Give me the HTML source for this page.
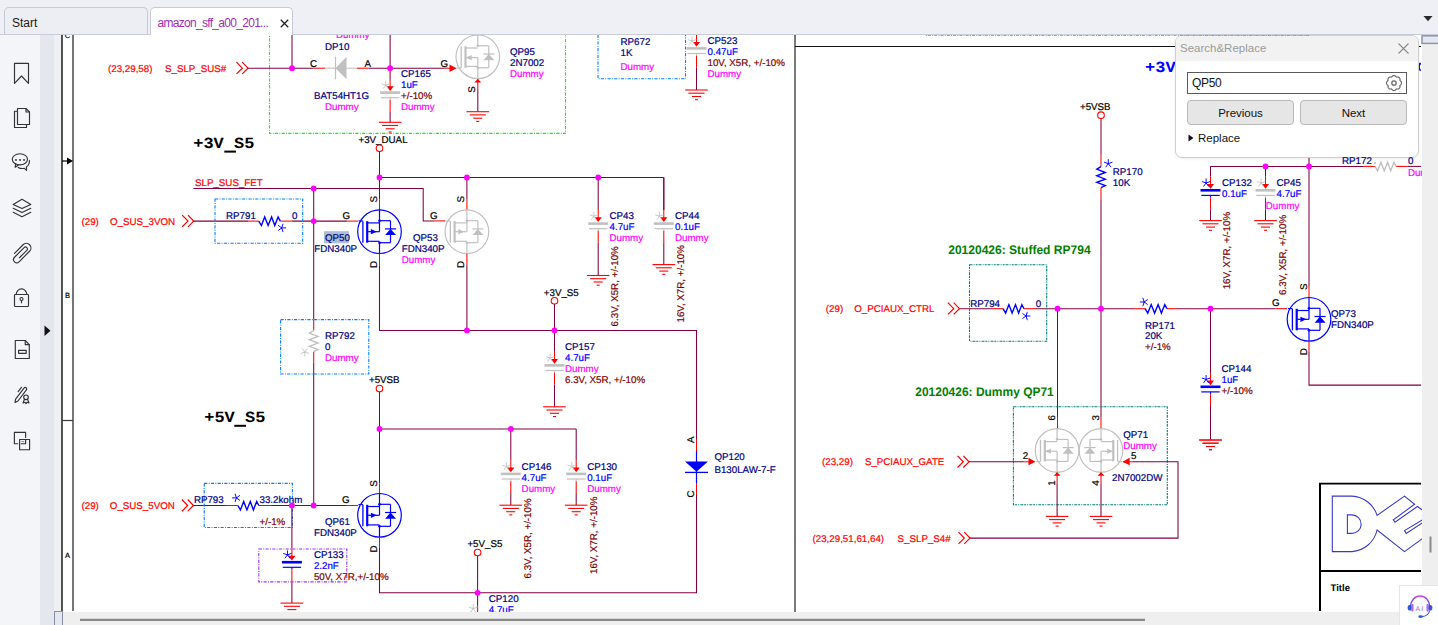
<!DOCTYPE html>
<html><head><meta charset="utf-8"><title>viewer</title>
<style>
html,body{margin:0;padding:0;}
body{width:1438px;height:625px;overflow:hidden;position:relative;background:#eef0f4;font-family:"Liberation Sans",sans-serif;}
#tabbar{position:absolute;left:0;top:0;width:1438px;height:34px;background:#eef0f5;border-bottom:1px solid #c9cdd8;}
.tab{position:absolute;top:7px;height:27px;box-sizing:border-box;border:1px solid #c5cad6;border-bottom:none;border-radius:5px 5px 0 0;font-size:12px;line-height:12px;white-space:nowrap;}
.tab span.t{position:absolute;top:9px;}
#t1{left:4px;width:144px;background:#eceef3;color:#1a1a1a;}
#t1 span.t{left:7px;}
#t2{left:149.5px;width:143px;background:#ffffff;color:#a42bb5;height:28px;}
#t2 span.t{left:7px;letter-spacing:-0.7px;}
#side{position:absolute;left:0;top:35px;width:40px;height:590px;background:#f4f5f8;}
#strip{position:absolute;left:40px;top:35px;width:14px;height:590px;background:#e4e7ee;}
#page{position:absolute;left:62px;top:35px;width:1360px;height:577px;background:#fff;}
#vscroll{position:absolute;left:1422px;top:35px;width:16px;height:590px;background:#efefef;}
#hscroll{position:absolute;left:54px;top:611.5px;width:1368px;height:14px;background:#efefef;}
svg text{font-family:"Liberation Sans",sans-serif;text-rendering:geometricPrecision;}
#dlg{position:absolute;left:1175px;top:35px;width:244px;height:123px;box-sizing:border-box;border:1px solid #cfcfcf;border-radius:7px;background:#fff;overflow:hidden;box-shadow:0 1px 3px rgba(0,0,0,0.08);}
#dlgh{position:absolute;left:0;top:0;width:100%;height:25px;background:#f2f2f2;}
#dlgt{position:absolute;left:4px;top:6px;font-size:11.5px;color:#9b9b9b;}
#inp{position:absolute;left:11px;top:36px;width:220px;height:22px;box-sizing:border-box;border:1px solid #5a5a5a;background:#fff;}
#inpt{position:absolute;left:4px;top:3px;font-size:12px;color:#111;letter-spacing:-0.3px;}
.btn{position:absolute;top:64px;width:107px;height:25px;box-sizing:border-box;border:1px solid #b9b9b9;border-radius:4px;background:#e6e6e6;font-size:11.5px;color:#111;text-align:center;line-height:25px;}
#rep{position:absolute;left:22px;top:96px;font-size:11.5px;color:#111;}
</style></head><body>
<div id="tabbar">
 <div class="tab" id="t1"><span class="t">Start</span></div>
 <div class="tab" id="t2"><span class="t">amazon_sff_a00_201...</span><svg style="position:absolute;left:129.5px;top:11px" width="9" height="9"><path d="M0.8,0.8 L8.2,8.2 M8.2,0.8 L0.8,8.2" stroke="#222" stroke-width="1.3"/></svg></div>
 <svg style="position:absolute;left:1422.5px;top:15px" width="11" height="8"><polygon points="0.5,1 9.5,1 5,6.2" fill="#2a2a2a"/></svg>
</div>
<div id="side"></div>
<div id="strip"></div>
<div id="page"></div>
<div id="vscroll"></div>
<div id="hscroll"></div>
<svg style="position:absolute;left:0;top:0" width="1438" height="625" viewBox="0 0 1438 625">
<defs><clipPath id="pc"><rect x="54" y="35" width="1368" height="577"/></clipPath></defs>
<g fill="none"><path d="M14.5,63.3 L28.5,63.3 L28.5,83.3 L21.5,76 L14.5,83.3 Z" fill="none" stroke="#333333" stroke-width="1.15" stroke-linejoin="round" stroke-linecap="round"/><path d="M17.5,108.5 L26,108.5 L29.5,112 L29.5,124.5 L17.5,124.5 Z" fill="none" stroke="#333333" stroke-width="1.15" stroke-linejoin="round" stroke-linecap="round"/><path d="M26,108.5 L26,112 L29.5,112" fill="none" stroke="#333333" stroke-width="1.15" stroke-linejoin="round" stroke-linecap="round"/><path d="M17.5,111.2 L14.5,111.2 L14.5,127.5 L26.5,127.5 L26.5,124.5" fill="none" stroke="#333333" stroke-width="1.15" stroke-linejoin="round" stroke-linecap="round"/><ellipse cx="19.9" cy="159.3" rx="7.6" ry="5.6" fill="none" stroke="#333333" stroke-width="1.15" stroke-linejoin="round" stroke-linecap="round"/><path d="M15.6,163.6 L15.2,167.3 L18.2,165.2" fill="none" stroke="#333333" stroke-width="1.15" stroke-linejoin="round" stroke-linecap="round"/><path d="M29.4,160.6 C29.6,163.4 28.4,165.5 26.4,166.9 L26.6,170.4 L24.3,168.3 C22,168.8 19.9,168.4 18.2,167.4" fill="none" stroke="#333333" stroke-width="1.15" stroke-linejoin="round" stroke-linecap="round"/><rect x="15.1" y="159.1" width="1.7" height="1.7" fill="#333333"/><rect x="19.2" y="159.1" width="1.7" height="1.7" fill="#333333"/><rect x="23.2" y="159.1" width="1.7" height="1.7" fill="#333333"/><path d="M22,199.3 L30.8,204.4 L22,208.6 L13.2,204.4 Z" fill="none" stroke="#333333" stroke-width="1.15" stroke-linejoin="round" stroke-linecap="round"/><path d="M13.2,208.3 L22,212.6 L30.8,208.3" fill="none" stroke="#333333" stroke-width="1.15" stroke-linejoin="round" stroke-linecap="round"/><path d="M13.2,212.3 L22,216.7 L30.8,212.3" fill="none" stroke="#333333" stroke-width="1.15" stroke-linejoin="round" stroke-linecap="round"/><g transform="translate(22.3,253.3) rotate(-45)"><path d="M-5.5,-5.5 L6.6,-5.5 A4.6,4.6 0 0 1 6.6,3.7 L-8.3,3.7 A3.2,3.2 0 0 1 -8.3,-2.7 L5.3,-2.7 A1.9,1.9 0 0 1 5.3,1.1 L-5.2,1.1" fill="none" stroke="#333333" stroke-width="1.15" stroke-linejoin="round" stroke-linecap="round"/></g><path d="M16.2,294.5 A5.3,5.6 0 0 1 26.8,294.5" fill="none" stroke="#333333" stroke-width="1.15" stroke-linejoin="round" stroke-linecap="round"/><rect x="14.5" y="294.5" width="14" height="12" rx="0.8" fill="none" stroke="#333333" stroke-width="1.15" stroke-linejoin="round" stroke-linecap="round"/><circle cx="21.5" cy="299" r="1.5" fill="none" stroke="#333333" stroke-width="1.15" stroke-linejoin="round" stroke-linecap="round"/><path d="M21.5,300.5 L21.5,302.8" fill="none" stroke="#333333" stroke-width="1.15" stroke-linejoin="round" stroke-linecap="round"/><path d="M15.3,340.5 L25.2,340.5 L29.3,344.6 L29.3,358.5 L15.3,358.5 Z" fill="none" stroke="#333333" stroke-width="1.15" stroke-linejoin="round" stroke-linecap="round"/><path d="M25.2,340.5 L25.2,344.6 L29.3,344.6" fill="none" stroke="#333333" stroke-width="1.15" stroke-linejoin="round" stroke-linecap="round"/><rect x="18.6" y="350.3" width="7.6" height="3" fill="none" stroke="#333333" stroke-width="1.15" stroke-linejoin="round" stroke-linecap="round"/><path d="M18.1,391.6 L21.5,387.3" fill="none" stroke="#333333" stroke-width="1.15" stroke-linejoin="round" stroke-linecap="round"/><path d="M15,402.6 L15.6,399.2 L24,388.1 A1.5,1.5 0 0 1 26.4,389.9 L18,401 Z" fill="none" stroke="#333333" stroke-width="1.15" stroke-linejoin="round" stroke-linecap="round"/><circle cx="26" cy="397.3" r="2.3" fill="none" stroke="#333333" stroke-width="1.15" stroke-linejoin="round" stroke-linecap="round"/><path d="M24.5,399.3 L23,403 L25,402.3 L26,403.6 L27,402.3 L29,403 L27.5,399.3" fill="none" stroke="#333333" stroke-width="1.15" stroke-linejoin="round" stroke-linecap="round"/><path d="M17.7,443.7 L14.4,443.7 L14.4,432.4 L25.6,432.4 L25.6,437.4" fill="none" stroke="#333333" stroke-width="1.15" stroke-linejoin="round" stroke-linecap="round"/><rect x="19.6" y="439.5" width="10" height="10.2" fill="none" stroke="#333333" stroke-width="1.15" stroke-linejoin="round" stroke-linecap="round"/><path d="M21.2,443.7 L25.6,443.7 L25.6,439.5" fill="none" stroke="#333333" stroke-width="1.15" stroke-linejoin="round" stroke-linecap="round"/><path d="M21.4,441.6 L24.2,441.6" stroke="#888" stroke-width="1" fill="none"/></g>
<polygon points="44.5,325.5 50.5,330.7 44.5,336" fill="#111"/>
<g clip-path="url(#pc)">
<line x1="62.0" y1="30.0" x2="62.0" y2="611.2" stroke="#2a2a2a" stroke-width="1.6"/>
<line x1="73.0" y1="30.0" x2="73.0" y2="611.0" stroke="#3c3c3c" stroke-width="1.4"/>
<line x1="62.0" y1="161.0" x2="68.0" y2="161.0" stroke="#000000" stroke-width="1.2"/>
<polygon points="67.0,157.5 67.0,164.5 73.0,161.0" fill="#000000"/>
<line x1="62.0" y1="420.5" x2="73.0" y2="420.5" stroke="#3a3a3a" stroke-width="1.2"/>
<text x="67.5" y="38.0" fill="#000000" font-size="7.5" text-anchor="middle" stroke="#000000" stroke-width="0.2">C</text>
<text x="67.5" y="297.7" fill="#000000" font-size="7.5" text-anchor="middle" stroke="#000000" stroke-width="0.2">B</text>
<text x="67.5" y="557.7" fill="#000000" font-size="7.5" text-anchor="middle" stroke="#000000" stroke-width="0.2">A</text>
<line x1="795.0" y1="30.0" x2="795.0" y2="612.0" stroke="#2a2a2a" stroke-width="1.25"/>
<line x1="795.0" y1="46.5" x2="1421.0" y2="46.5" stroke="#111111" stroke-width="1.1"/>
<rect x="269.5" y="20.0" width="296.0" height="113.4" fill="none" stroke="#00ff00" stroke-width="1.1" stroke-dasharray="3.2 1.3 0.9 1.3"/>
<text x="108.0" y="71.5" fill="#ff0000" font-size="9.75" stroke="#ff0000" stroke-width="0.2">(23,29,58)</text>
<text x="165.0" y="71.5" fill="#ff0000" font-size="9.75" stroke="#ff0000" stroke-width="0.2">S_SLP_SUS#</text>
<polyline points="236.5,62.2 242.3,68.2 236.5,73.9" stroke="#ff0000" stroke-width="1.2" fill="none" stroke-linejoin="miter"/>
<polyline points="242.3,62.2 248.0,68.2 242.3,73.9" stroke="#ff0000" stroke-width="1.2" fill="none" stroke-linejoin="miter"/>
<line x1="248.0" y1="68.2" x2="313.4" y2="68.2" stroke="#800040" stroke-width="1.05"/>
<line x1="292.0" y1="30.0" x2="292.0" y2="68.2" stroke="#800040" stroke-width="1.05"/>
<line x1="313.4" y1="68.2" x2="325.0" y2="68.2" stroke="#ff0000" stroke-width="1.05"/>
<line x1="325.0" y1="68.2" x2="357.0" y2="68.2" stroke="#c0c0c0" stroke-width="1.05"/>
<line x1="335.5" y1="56.8" x2="335.5" y2="79.2" stroke="#c0c0c0" stroke-width="1.2"/>
<polygon points="335.5,68.2 346.5,56.8 346.5,79.2" fill="#c0c0c0"/>
<line x1="357.0" y1="68.2" x2="368.5" y2="68.2" stroke="#ff0000" stroke-width="1.05"/>
<line x1="368.5" y1="68.2" x2="444.7" y2="68.2" stroke="#800040" stroke-width="1.05"/>
<line x1="390.1" y1="30.0" x2="390.1" y2="68.2" stroke="#800040" stroke-width="1.05"/>
<text x="325.0" y="50.0" fill="#000080" font-size="9.75" stroke="#000080" stroke-width="0.2">DP10</text>
<text x="310.0" y="66.5" fill="#000000" font-size="9.75" stroke="#000000" stroke-width="0.2">C</text>
<text x="364.5" y="66.5" fill="#000000" font-size="9.75" stroke="#000000" stroke-width="0.2">A</text>
<text x="440.5" y="66.5" fill="#000000" font-size="9.75" stroke="#000000" stroke-width="0.2">G</text>
<text x="314.0" y="98.5" fill="#000080" font-size="9.75" stroke="#000080" stroke-width="0.2">BAT54HT1G</text>
<text x="325.0" y="110.0" fill="#ff00ff" font-size="9.75" stroke="#ff00ff" stroke-width="0.2">Dummy</text>
<text x="336.0" y="37.5" fill="#ff00ff" font-size="9.75" stroke="#ff00ff" stroke-width="0.2">Dummy</text>
<line x1="390.1" y1="79.0" x2="390.1" y2="87.1" stroke="#ff0000" stroke-width="1.05"/>
<polygon points="386.5,86.2 393.7,86.2 390.1,91.0" fill="#ff0000"/>
<line x1="380.1" y1="92.6" x2="400.1" y2="92.6" stroke="#c0c0c0" stroke-width="2.6"/>
<line x1="380.9" y1="97.7" x2="399.3" y2="97.7" stroke="#c0c0c0" stroke-width="1.2"/>
<line x1="390.1" y1="97.7" x2="390.1" y2="100.0" stroke="#c0c0c0" stroke-width="1.1"/>
<line x1="390.1" y1="100.0" x2="390.1" y2="111.8" stroke="#ff0000" stroke-width="1.05"/>
<path d="M385.70,85.20 L385.70,81.20 M385.70,85.20 L389.50,83.96 M385.70,85.20 L388.05,88.44 M385.70,85.20 L383.35,88.44 M385.70,85.20 L381.90,83.96 " stroke="#c0c0c0" stroke-width="0.85" fill="none" stroke-linecap="round"/>
<line x1="390.1" y1="68.2" x2="390.1" y2="79.0" stroke="#800040" stroke-width="1.05"/>
<line x1="390.1" y1="111.8" x2="390.1" y2="122.3" stroke="#800040" stroke-width="1.05"/>
<line x1="378.8" y1="122.3" x2="401.4" y2="122.3" stroke="#ff0000" stroke-width="1.1"/>
<line x1="382.1" y1="125.5" x2="398.1" y2="125.5" stroke="#ff0000" stroke-width="1.1"/>
<line x1="385.6" y1="128.8" x2="394.6" y2="128.8" stroke="#ff0000" stroke-width="1.1"/>
<line x1="388.6" y1="132.0" x2="391.6" y2="132.0" stroke="#ff0000" stroke-width="1.1"/>
<text x="401.0" y="77.1" fill="#000080" font-size="9.75" stroke="#000080" stroke-width="0.2">CP165</text>
<text x="401.0" y="88.0" fill="#0000ff" font-size="9.75" stroke="#0000ff" stroke-width="0.2">1uF</text>
<text x="401.0" y="99.1" fill="#800000" font-size="9.75" stroke="#800000" stroke-width="0.2">+/-10%</text>
<text x="401.0" y="110.2" fill="#ff00ff" font-size="9.75" stroke="#ff00ff" stroke-width="0.2">Dummy</text>
<line x1="444.7" y1="68.2" x2="450.0" y2="68.2" stroke="#ff0000" stroke-width="1.05"/>
<polygon points="449.5,64.5 449.5,72.0 456.6,68.2" fill="#ff0000"/>
<g transform="translate(477.8,56.8)"><circle cx="0" cy="0" r="21.8" fill="none" stroke="#c0c0c0" stroke-width="1.2"/><line x1="0" y1="-22" x2="0" y2="-11" stroke="#c0c0c0" stroke-width="1.2"/><line x1="0" y1="11" x2="0" y2="22" stroke="#c0c0c0" stroke-width="1.2"/><line x1="0" y1="-11" x2="11" y2="-11" stroke="#c0c0c0" stroke-width="1.2"/><line x1="11" y1="-11" x2="11" y2="11" stroke="#c0c0c0" stroke-width="1.2"/><line x1="0" y1="11" x2="11" y2="11" stroke="#c0c0c0" stroke-width="1.2"/><circle cx="0" cy="-11" r="1.3" fill="#c0c0c0"/><circle cx="0" cy="11" r="1.3" fill="#c0c0c0"/><line x1="-12.3" y1="-10.5" x2="-12.3" y2="11" stroke="#c0c0c0" stroke-width="2.2"/><line x1="-16.6" y1="-10.5" x2="-16.6" y2="11" stroke="#c0c0c0" stroke-width="1.3"/><line x1="-12.3" y1="-8.8" x2="0" y2="-8.8" stroke="#c0c0c0" stroke-width="1.2"/><line x1="-12.3" y1="9.6" x2="0" y2="9.6" stroke="#c0c0c0" stroke-width="1.2"/><line x1="-12.3" y1="0.8" x2="0" y2="0.8" stroke="#c0c0c0" stroke-width="1.2"/><line x1="0" y1="0.8" x2="0" y2="11" stroke="#c0c0c0" stroke-width="1.2"/><polygon points="-6.2,-1.8 -6.2,3.4 -11.8,0.8" fill="#c0c0c0"/><line x1="-21" y1="11.2" x2="-16.6" y2="11.2" stroke="#c0c0c0" stroke-width="1.2"/><line x1="5.5" y1="-2.8" x2="16.6" y2="-2.8" stroke="#c0c0c0" stroke-width="1.2"/><polygon points="5.6,3.4 16.6,3.4 11,-2.8" fill="#c0c0c0"/></g>
<line x1="477.8" y1="30.0" x2="477.8" y2="35.0" stroke="#ff0000" stroke-width="1.05"/>
<polygon points="474.3,82.5 481.3,82.5 477.8,78.9" fill="#ff0000"/>
<line x1="477.8" y1="78.9" x2="477.8" y2="90.0" stroke="#ff0000" stroke-width="1.05"/>
<line x1="477.8" y1="90.0" x2="477.8" y2="111.7" stroke="#800040" stroke-width="1.05"/>
<line x1="466.5" y1="111.7" x2="489.1" y2="111.7" stroke="#ff0000" stroke-width="1.1"/>
<line x1="469.8" y1="114.9" x2="485.8" y2="114.9" stroke="#ff0000" stroke-width="1.1"/>
<line x1="473.3" y1="118.2" x2="482.3" y2="118.2" stroke="#ff0000" stroke-width="1.1"/>
<line x1="476.3" y1="121.4" x2="479.3" y2="121.4" stroke="#ff0000" stroke-width="1.1"/>
<text transform="translate(471.8,89.5) rotate(-90)" x="0" y="3.5" fill="#000000" font-size="9.75" text-anchor="middle" stroke="#000000" stroke-width="0.2">S</text>
<text x="510.0" y="55.2" fill="#000080" font-size="9.75" stroke="#000080" stroke-width="0.2">QP95</text>
<text x="510.0" y="66.2" fill="#000080" font-size="9.75" stroke="#000080" stroke-width="0.2">2N7002</text>
<text x="510.0" y="77.1" fill="#ff00ff" font-size="9.75" stroke="#ff00ff" stroke-width="0.2">Dummy</text>
<rect x="598.0" y="20.0" width="87.5" height="58.8" fill="none" stroke="#0080ff" stroke-width="1.1" stroke-dasharray="3.2 1.3 0.9 1.3"/>
<text x="620.5" y="44.5" fill="#000080" font-size="9.75" stroke="#000080" stroke-width="0.2">RP672</text>
<text x="620.5" y="55.5" fill="#000080" font-size="9.75" stroke="#000080" stroke-width="0.2">1K</text>
<text x="620.5" y="70.1" fill="#ff00ff" font-size="9.75" stroke="#ff00ff" stroke-width="0.2">Dummy</text>
<line x1="696.5" y1="34.8" x2="696.5" y2="42.9" stroke="#ff0000" stroke-width="1.05"/>
<polygon points="692.9,42.0 700.1,42.0 696.5,46.8" fill="#ff0000"/>
<line x1="686.5" y1="48.4" x2="706.5" y2="48.4" stroke="#c0c0c0" stroke-width="2.6"/>
<line x1="687.3" y1="53.5" x2="705.7" y2="53.5" stroke="#c0c0c0" stroke-width="1.2"/>
<line x1="696.5" y1="53.5" x2="696.5" y2="55.8" stroke="#c0c0c0" stroke-width="1.1"/>
<line x1="696.5" y1="55.8" x2="696.5" y2="67.6" stroke="#ff0000" stroke-width="1.05"/>
<path d="M692.10,41.00 L692.10,37.00 M692.10,41.00 L695.90,39.76 M692.10,41.00 L694.45,44.24 M692.10,41.00 L689.75,44.24 M692.10,41.00 L688.30,39.76 " stroke="#c0c0c0" stroke-width="0.85" fill="none" stroke-linecap="round"/>
<line x1="696.5" y1="30.0" x2="696.5" y2="34.8" stroke="#800040" stroke-width="1.05"/>
<line x1="696.5" y1="67.6" x2="696.5" y2="90.0" stroke="#800040" stroke-width="1.05"/>
<line x1="685.2" y1="90.0" x2="707.8" y2="90.0" stroke="#ff0000" stroke-width="1.1"/>
<line x1="688.5" y1="93.2" x2="704.5" y2="93.2" stroke="#ff0000" stroke-width="1.1"/>
<line x1="692.0" y1="96.5" x2="701.0" y2="96.5" stroke="#ff0000" stroke-width="1.1"/>
<line x1="695.0" y1="99.7" x2="698.0" y2="99.7" stroke="#ff0000" stroke-width="1.1"/>
<text x="707.5" y="44.0" fill="#000080" font-size="9.75" stroke="#000080" stroke-width="0.2">CP523</text>
<text x="707.5" y="55.0" fill="#0000ff" font-size="9.75" stroke="#0000ff" stroke-width="0.2">0.47uF</text>
<text x="707.5" y="66.1" fill="#800000" font-size="9.75" stroke="#800000" stroke-width="0.2">10V, X5R, +/-10%</text>
<text x="707.5" y="77.1" fill="#ff00ff" font-size="9.75" stroke="#ff00ff" stroke-width="0.2">Dummy</text>
<text transform="translate(193.2,147.8) scale(1,0.915)" x="0" y="0" fill="#000" font-size="17" font-weight="bold" style="font-family:&quot;Liberation Mono&quot;">+3V S5</text>
<rect x="224.3" y="150.6" width="11.6" height="2" fill="#000"/>
<text x="358.5" y="143.2" fill="#000000" font-size="9.75" stroke="#000000" stroke-width="0.2">+3V_DUAL</text>
<circle cx="379.5" cy="148.3" r="3.3" fill="none" stroke="#ff0000" stroke-width="1.1"/>
<line x1="379.5" y1="151.6" x2="379.5" y2="199.2" stroke="#800040" stroke-width="1.05"/>
<line x1="379.5" y1="199.2" x2="379.5" y2="210.0" stroke="#ff0000" stroke-width="1.05"/>
<line x1="379.5" y1="177.5" x2="663.8" y2="177.5" stroke="#800040" stroke-width="1.05"/>
<line x1="466.9" y1="177.5" x2="466.9" y2="199.2" stroke="#800040" stroke-width="1.05"/>
<line x1="466.9" y1="199.2" x2="466.9" y2="210.0" stroke="#ff0000" stroke-width="1.05"/>
<line x1="598.2" y1="210.0" x2="598.2" y2="218.1" stroke="#ff0000" stroke-width="1.05"/>
<polygon points="594.6,217.2 601.8,217.2 598.2,222.0" fill="#ff0000"/>
<line x1="588.2" y1="223.6" x2="608.2" y2="223.6" stroke="#c0c0c0" stroke-width="2.6"/>
<line x1="589.0" y1="228.7" x2="607.4" y2="228.7" stroke="#c0c0c0" stroke-width="1.2"/>
<line x1="598.2" y1="228.7" x2="598.2" y2="231.0" stroke="#c0c0c0" stroke-width="1.1"/>
<line x1="598.2" y1="231.0" x2="598.2" y2="242.8" stroke="#ff0000" stroke-width="1.05"/>
<path d="M593.80,216.20 L593.80,212.20 M593.80,216.20 L597.60,214.96 M593.80,216.20 L596.15,219.44 M593.80,216.20 L591.45,219.44 M593.80,216.20 L590.00,214.96 " stroke="#c0c0c0" stroke-width="0.85" fill="none" stroke-linecap="round"/>
<line x1="598.2" y1="177.5" x2="598.2" y2="210.0" stroke="#800040" stroke-width="1.05"/>
<line x1="598.2" y1="242.8" x2="598.2" y2="275.5" stroke="#800040" stroke-width="1.05"/>
<line x1="586.9" y1="275.5" x2="609.5" y2="275.5" stroke="#ff0000" stroke-width="1.1"/>
<line x1="590.2" y1="278.7" x2="606.2" y2="278.7" stroke="#ff0000" stroke-width="1.1"/>
<line x1="593.7" y1="282.0" x2="602.7" y2="282.0" stroke="#ff0000" stroke-width="1.1"/>
<line x1="596.7" y1="285.2" x2="599.7" y2="285.2" stroke="#ff0000" stroke-width="1.1"/>
<line x1="663.8" y1="177.5" x2="663.8" y2="210.0" stroke="#800040" stroke-width="1.05"/>
<line x1="663.8" y1="210.0" x2="663.8" y2="218.1" stroke="#ff0000" stroke-width="1.05"/>
<polygon points="660.2,217.2 667.4,217.2 663.8,222.0" fill="#ff0000"/>
<line x1="653.8" y1="223.6" x2="673.8" y2="223.6" stroke="#c0c0c0" stroke-width="2.6"/>
<line x1="654.6" y1="228.7" x2="673.0" y2="228.7" stroke="#c0c0c0" stroke-width="1.2"/>
<line x1="663.8" y1="228.7" x2="663.8" y2="231.0" stroke="#c0c0c0" stroke-width="1.1"/>
<line x1="663.8" y1="231.0" x2="663.8" y2="242.8" stroke="#ff0000" stroke-width="1.05"/>
<path d="M659.40,216.20 L659.40,212.20 M659.40,216.20 L663.20,214.96 M659.40,216.20 L661.75,219.44 M659.40,216.20 L657.05,219.44 M659.40,216.20 L655.60,214.96 " stroke="#c0c0c0" stroke-width="0.85" fill="none" stroke-linecap="round"/>
<line x1="663.8" y1="177.5" x2="663.8" y2="210.0" stroke="#800040" stroke-width="1.05"/>
<line x1="663.8" y1="242.8" x2="663.8" y2="264.6" stroke="#800040" stroke-width="1.05"/>
<line x1="652.5" y1="264.6" x2="675.1" y2="264.6" stroke="#ff0000" stroke-width="1.1"/>
<line x1="655.8" y1="267.8" x2="671.8" y2="267.8" stroke="#ff0000" stroke-width="1.1"/>
<line x1="659.3" y1="271.1" x2="668.3" y2="271.1" stroke="#ff0000" stroke-width="1.1"/>
<line x1="662.3" y1="274.3" x2="665.3" y2="274.3" stroke="#ff0000" stroke-width="1.1"/>
<text x="609.5" y="219.0" fill="#000080" font-size="9.75" stroke="#000080" stroke-width="0.2">CP43</text>
<text x="609.5" y="230.0" fill="#0000ff" font-size="9.75" stroke="#0000ff" stroke-width="0.2">4.7uF</text>
<text x="609.5" y="241.2" fill="#ff00ff" font-size="9.75" stroke="#ff00ff" stroke-width="0.2">Dummy</text>
<text transform="translate(614.3,326.4) rotate(-90)" x="0" y="3.5" fill="#800000" font-size="9.75" text-anchor="start" stroke="#800000" stroke-width="0.2">6.3V, X5R, +/-10%</text>
<text x="675.0" y="219.0" fill="#000080" font-size="9.75" stroke="#000080" stroke-width="0.2">CP44</text>
<text x="675.0" y="230.0" fill="#0000ff" font-size="9.75" stroke="#0000ff" stroke-width="0.2">0.1uF</text>
<text x="675.0" y="241.2" fill="#ff00ff" font-size="9.75" stroke="#ff00ff" stroke-width="0.2">Dummy</text>
<text transform="translate(680.4,322.5) rotate(-90)" x="0" y="3.5" fill="#800000" font-size="9.75" text-anchor="start" stroke="#800000" stroke-width="0.2">16V, X7R, +/-10%</text>
<text x="195.0" y="186.3" fill="#ff0000" font-size="9.75" stroke="#ff0000" stroke-width="0.2">SLP_SUS_FET</text>
<polyline points="193.4,188.4 423.2,188.4 423.2,220.9 434.1,220.9" stroke="#800040" stroke-width="1.05" fill="none" stroke-linejoin="miter"/>
<line x1="434.1" y1="220.9" x2="445.3" y2="220.9" stroke="#ff0000" stroke-width="1.05"/>
<text x="81.5" y="225.0" fill="#ff0000" font-size="9.75" stroke="#ff0000" stroke-width="0.2">(29)</text>
<text x="110.0" y="225.0" fill="#ff0000" font-size="9.75" stroke="#ff0000" stroke-width="0.2">O_SUS_3VON</text>
<polyline points="182.2,215.1 188.0,221.1 182.2,226.8" stroke="#ff0000" stroke-width="1.2" fill="none" stroke-linejoin="miter"/>
<polyline points="188.0,215.1 193.7,221.1 188.0,226.8" stroke="#ff0000" stroke-width="1.2" fill="none" stroke-linejoin="miter"/>
<line x1="193.7" y1="221.1" x2="248.0" y2="221.1" stroke="#800040" stroke-width="1.05"/>
<line x1="248.0" y1="221.1" x2="258.7" y2="221.1" stroke="#ff0000" stroke-width="1.05"/>
<line x1="280.3" y1="221.1" x2="292.1" y2="221.1" stroke="#ff0000" stroke-width="1.05"/>
<polyline points="258.7,221.1 261.4,225.5 264.7,217.0 268.1,225.5 271.6,217.0 274.8,225.5 278.1,217.0 280.3,221.1" stroke="#0000ff" stroke-width="1.4" fill="none" stroke-linejoin="miter"/>
<path d="M281.70,227.90 L285.70,227.90 M281.70,227.90 L282.94,231.70 M281.70,227.90 L278.46,230.25 M281.70,227.90 L278.46,225.55 M281.70,227.90 L282.94,224.10 " stroke="#0000ff" stroke-width="0.95" fill="none" stroke-linecap="round"/>
<line x1="292.1" y1="221.1" x2="346.8" y2="221.1" stroke="#800040" stroke-width="1.05"/>
<line x1="346.8" y1="221.1" x2="358.0" y2="221.1" stroke="#ff0000" stroke-width="1.05"/>
<rect x="215.0" y="199.0" width="87.7" height="44.3" fill="none" stroke="#0080ff" stroke-width="1.1" stroke-dasharray="3.2 1.3 0.9 1.3"/>
<text x="226.0" y="219.1" fill="#000080" font-size="9.75" stroke="#000080" stroke-width="0.2">RP791</text>
<text x="292.0" y="218.7" fill="#000080" font-size="9.75" stroke="#000080" stroke-width="0.2">0</text>
<g transform="translate(379.5,231.7)"><circle cx="0" cy="0" r="21.8" fill="none" stroke="#0000ff" stroke-width="1.2"/><line x1="0" y1="-22" x2="0" y2="-11" stroke="#0000ff" stroke-width="1.2"/><line x1="0" y1="11" x2="0" y2="22" stroke="#0000ff" stroke-width="1.2"/><line x1="0" y1="-11" x2="11" y2="-11" stroke="#0000ff" stroke-width="1.2"/><line x1="11" y1="-11" x2="11" y2="11" stroke="#0000ff" stroke-width="1.2"/><line x1="0" y1="11" x2="11" y2="11" stroke="#0000ff" stroke-width="1.2"/><circle cx="0" cy="-11" r="1.3" fill="#0000ff"/><circle cx="0" cy="11" r="1.3" fill="#0000ff"/><line x1="-12.3" y1="-10.5" x2="-12.3" y2="11" stroke="#0000ff" stroke-width="2.2"/><line x1="-16.6" y1="-10.5" x2="-16.6" y2="11" stroke="#0000ff" stroke-width="1.3"/><line x1="-12.3" y1="-8.8" x2="0" y2="-8.8" stroke="#0000ff" stroke-width="1.2"/><line x1="-12.3" y1="9.6" x2="0" y2="9.6" stroke="#0000ff" stroke-width="1.2"/><line x1="-12.3" y1="0" x2="0" y2="0" stroke="#0000ff" stroke-width="1.2"/><line x1="0" y1="-11" x2="0" y2="0" stroke="#0000ff" stroke-width="1.2"/><polygon points="-8.6,-2.6 -8.6,2.6 -2.6,0" fill="#0000ff"/><line x1="-21" y1="-10.7" x2="-16.6" y2="-10.7" stroke="#0000ff" stroke-width="1.2"/><line x1="5.5" y1="-2.8" x2="16.6" y2="-2.8" stroke="#0000ff" stroke-width="1.2"/><polygon points="5.6,3.4 16.6,3.4 11,-2.8" fill="#0000ff"/></g>
<text x="342.5" y="219.0" fill="#000000" font-size="9.75" stroke="#000000" stroke-width="0.2">G</text>
<text transform="translate(373.7,199.2) rotate(-90)" x="0" y="3.5" fill="#000000" font-size="9.75" text-anchor="middle" stroke="#000000" stroke-width="0.2">S</text>
<text transform="translate(373.7,264.6) rotate(-90)" x="0" y="3.5" fill="#000000" font-size="9.75" text-anchor="middle" stroke="#000000" stroke-width="0.2">D</text>
<rect x="324" y="231.2" width="24.8" height="12.1" fill="#abc0d6"/>
<text x="325.0" y="241.1" fill="#000080" font-size="9.75" stroke="#000080" stroke-width="0.2">QP50</text>
<text x="314.3" y="252.3" fill="#000080" font-size="9.75" stroke="#000080" stroke-width="0.2">FDN340P</text>
<line x1="379.5" y1="253.7" x2="379.5" y2="265.2" stroke="#ff0000" stroke-width="1.05"/>
<g transform="translate(466.9,231.7)"><circle cx="0" cy="0" r="21.8" fill="none" stroke="#c0c0c0" stroke-width="1.2"/><line x1="0" y1="-22" x2="0" y2="-11" stroke="#c0c0c0" stroke-width="1.2"/><line x1="0" y1="11" x2="0" y2="22" stroke="#c0c0c0" stroke-width="1.2"/><line x1="0" y1="-11" x2="11" y2="-11" stroke="#c0c0c0" stroke-width="1.2"/><line x1="11" y1="-11" x2="11" y2="11" stroke="#c0c0c0" stroke-width="1.2"/><line x1="0" y1="11" x2="11" y2="11" stroke="#c0c0c0" stroke-width="1.2"/><circle cx="0" cy="-11" r="1.3" fill="#c0c0c0"/><circle cx="0" cy="11" r="1.3" fill="#c0c0c0"/><line x1="-12.3" y1="-10.5" x2="-12.3" y2="11" stroke="#c0c0c0" stroke-width="2.2"/><line x1="-16.6" y1="-10.5" x2="-16.6" y2="11" stroke="#c0c0c0" stroke-width="1.3"/><line x1="-12.3" y1="-8.8" x2="0" y2="-8.8" stroke="#c0c0c0" stroke-width="1.2"/><line x1="-12.3" y1="9.6" x2="0" y2="9.6" stroke="#c0c0c0" stroke-width="1.2"/><line x1="-12.3" y1="0" x2="0" y2="0" stroke="#c0c0c0" stroke-width="1.2"/><line x1="0" y1="-11" x2="0" y2="0" stroke="#c0c0c0" stroke-width="1.2"/><polygon points="-8.6,-2.6 -8.6,2.6 -2.6,0" fill="#c0c0c0"/><line x1="-21" y1="-10.7" x2="-16.6" y2="-10.7" stroke="#c0c0c0" stroke-width="1.2"/><line x1="5.5" y1="-2.8" x2="16.6" y2="-2.8" stroke="#c0c0c0" stroke-width="1.2"/><polygon points="5.6,3.4 16.6,3.4 11,-2.8" fill="#c0c0c0"/></g>
<line x1="466.9" y1="253.7" x2="466.9" y2="265.2" stroke="#ff0000" stroke-width="1.05"/>
<text x="430.0" y="219.0" fill="#000000" font-size="9.75" stroke="#000000" stroke-width="0.2">G</text>
<text transform="translate(460.6,199.2) rotate(-90)" x="0" y="3.5" fill="#000000" font-size="9.75" text-anchor="middle" stroke="#000000" stroke-width="0.2">S</text>
<text transform="translate(460.6,264.6) rotate(-90)" x="0" y="3.5" fill="#000000" font-size="9.75" text-anchor="middle" stroke="#000000" stroke-width="0.2">D</text>
<text x="412.9" y="241.1" fill="#000080" font-size="9.75" stroke="#000080" stroke-width="0.2">QP53</text>
<text x="401.7" y="252.3" fill="#000080" font-size="9.75" stroke="#000080" stroke-width="0.2">FDN340P</text>
<text x="401.7" y="263.1" fill="#ff00ff" font-size="9.75" stroke="#ff00ff" stroke-width="0.2">Dummy</text>
<polyline points="379.5,265.2 379.5,330.4 696.5,330.4 696.5,439.0" stroke="#800040" stroke-width="1.05" fill="none" stroke-linejoin="miter"/>
<line x1="466.9" y1="265.2" x2="466.9" y2="330.4" stroke="#800040" stroke-width="1.05"/>
<text x="543.8" y="296.1" fill="#000000" font-size="9.75" stroke="#000000" stroke-width="0.2">+3V_S5</text>
<circle cx="554.5" cy="300.8" r="3.3" fill="none" stroke="#ff0000" stroke-width="1.1"/>
<line x1="554.5" y1="304.1" x2="554.5" y2="330.4" stroke="#800040" stroke-width="1.05"/>
<line x1="554.5" y1="351.8" x2="554.5" y2="359.9" stroke="#ff0000" stroke-width="1.05"/>
<polygon points="550.9,359.0 558.1,359.0 554.5,363.8" fill="#ff0000"/>
<line x1="544.5" y1="365.4" x2="564.5" y2="365.4" stroke="#c0c0c0" stroke-width="2.6"/>
<line x1="545.3" y1="370.5" x2="563.7" y2="370.5" stroke="#c0c0c0" stroke-width="1.2"/>
<line x1="554.5" y1="370.5" x2="554.5" y2="372.8" stroke="#c0c0c0" stroke-width="1.1"/>
<line x1="554.5" y1="372.8" x2="554.5" y2="384.6" stroke="#ff0000" stroke-width="1.05"/>
<path d="M550.10,358.00 L550.10,354.00 M550.10,358.00 L553.90,356.76 M550.10,358.00 L552.45,361.24 M550.10,358.00 L547.75,361.24 M550.10,358.00 L546.30,356.76 " stroke="#c0c0c0" stroke-width="0.85" fill="none" stroke-linecap="round"/>
<line x1="554.5" y1="330.4" x2="554.5" y2="351.8" stroke="#800040" stroke-width="1.05"/>
<line x1="554.5" y1="384.6" x2="554.5" y2="406.8" stroke="#800040" stroke-width="1.05"/>
<line x1="543.2" y1="406.8" x2="565.8" y2="406.8" stroke="#ff0000" stroke-width="1.1"/>
<line x1="546.5" y1="410.0" x2="562.5" y2="410.0" stroke="#ff0000" stroke-width="1.1"/>
<line x1="550.0" y1="413.3" x2="559.0" y2="413.3" stroke="#ff0000" stroke-width="1.1"/>
<line x1="553.0" y1="416.5" x2="556.0" y2="416.5" stroke="#ff0000" stroke-width="1.1"/>
<text x="565.0" y="350.1" fill="#000080" font-size="9.75" stroke="#000080" stroke-width="0.2">CP157</text>
<text x="565.0" y="361.1" fill="#0000ff" font-size="9.75" stroke="#0000ff" stroke-width="0.2">4.7uF</text>
<text x="565.0" y="372.1" fill="#ff00ff" font-size="9.75" stroke="#ff00ff" stroke-width="0.2">Dummy</text>
<text x="565.0" y="383.1" fill="#800000" font-size="9.75" stroke="#800000" stroke-width="0.2">6.3V, X5R, +/-10%</text>
<line x1="313.7" y1="188.4" x2="313.7" y2="319.2" stroke="#800040" stroke-width="1.05"/>
<line x1="313.7" y1="319.2" x2="313.7" y2="330.4" stroke="#ff0000" stroke-width="1.05"/>
<line x1="313.7" y1="351.7" x2="313.7" y2="362.8" stroke="#ff0000" stroke-width="1.05"/>
<polyline points="313.7,330.4 309.5,333.1 318.0,336.4 309.5,339.7 318.0,343.1 309.5,346.3 318.0,349.6 313.7,351.7" stroke="#c0c0c0" stroke-width="1.4" fill="none" stroke-linejoin="miter"/>
<path d="M304.80,352.10 L304.80,356.10 M304.80,352.10 L301.00,353.34 M304.80,352.10 L302.45,348.86 M304.80,352.10 L307.15,348.86 M304.80,352.10 L308.60,353.34 " stroke="#c0c0c0" stroke-width="0.85" fill="none" stroke-linecap="round"/>
<line x1="313.7" y1="362.8" x2="313.7" y2="505.5" stroke="#800040" stroke-width="1.05"/>
<rect x="280.6" y="319.6" width="88.2" height="54.4" fill="none" stroke="#0080ff" stroke-width="1.1" stroke-dasharray="3.2 1.3 0.9 1.3"/>
<text x="325.0" y="339.0" fill="#000080" font-size="9.75" stroke="#000080" stroke-width="0.2">RP792</text>
<text x="325.0" y="350.0" fill="#000080" font-size="9.75" stroke="#000080" stroke-width="0.2">0</text>
<text x="325.0" y="361.0" fill="#ff00ff" font-size="9.75" stroke="#ff00ff" stroke-width="0.2">Dummy</text>
<text transform="translate(204.2,421.8) scale(1,0.915)" x="0" y="0" fill="#000" font-size="17" font-weight="bold" style="font-family:&quot;Liberation Mono&quot;">+5V S5</text>
<rect x="234.3" y="424.8" width="11.8" height="2" fill="#000"/>
<text x="369.0" y="383.1" fill="#000000" font-size="9.75" stroke="#000000" stroke-width="0.2">+5VSB</text>
<circle cx="379.5" cy="388.6" r="3.3" fill="none" stroke="#ff0000" stroke-width="1.1"/>
<line x1="379.5" y1="391.9" x2="379.5" y2="483.3" stroke="#800040" stroke-width="1.05"/>
<line x1="379.5" y1="483.3" x2="379.5" y2="494.0" stroke="#ff0000" stroke-width="1.05"/>
<line x1="379.5" y1="428.9" x2="576.2" y2="428.9" stroke="#800040" stroke-width="1.05"/>
<line x1="510.8" y1="460.3" x2="510.8" y2="468.4" stroke="#ff0000" stroke-width="1.05"/>
<polygon points="507.2,467.5 514.4,467.5 510.8,472.3" fill="#ff0000"/>
<line x1="500.8" y1="473.9" x2="520.8" y2="473.9" stroke="#c0c0c0" stroke-width="2.6"/>
<line x1="501.6" y1="479.0" x2="520.0" y2="479.0" stroke="#c0c0c0" stroke-width="1.2"/>
<line x1="510.8" y1="479.0" x2="510.8" y2="481.3" stroke="#c0c0c0" stroke-width="1.1"/>
<line x1="510.8" y1="481.3" x2="510.8" y2="493.1" stroke="#ff0000" stroke-width="1.05"/>
<path d="M506.40,466.50 L506.40,462.50 M506.40,466.50 L510.20,465.26 M506.40,466.50 L508.75,469.74 M506.40,466.50 L504.05,469.74 M506.40,466.50 L502.60,465.26 " stroke="#c0c0c0" stroke-width="0.85" fill="none" stroke-linecap="round"/>
<line x1="510.8" y1="428.9" x2="510.8" y2="460.3" stroke="#800040" stroke-width="1.05"/>
<line x1="510.8" y1="493.1" x2="510.8" y2="505.2" stroke="#800040" stroke-width="1.05"/>
<line x1="499.5" y1="505.2" x2="522.1" y2="505.2" stroke="#ff0000" stroke-width="1.1"/>
<line x1="502.8" y1="508.4" x2="518.8" y2="508.4" stroke="#ff0000" stroke-width="1.1"/>
<line x1="506.3" y1="511.7" x2="515.3" y2="511.7" stroke="#ff0000" stroke-width="1.1"/>
<line x1="509.3" y1="514.9" x2="512.3" y2="514.9" stroke="#ff0000" stroke-width="1.1"/>
<line x1="576.2" y1="460.3" x2="576.2" y2="468.4" stroke="#ff0000" stroke-width="1.05"/>
<polygon points="572.6,467.5 579.8,467.5 576.2,472.3" fill="#ff0000"/>
<line x1="566.2" y1="473.9" x2="586.2" y2="473.9" stroke="#c0c0c0" stroke-width="2.6"/>
<line x1="567.0" y1="479.0" x2="585.4" y2="479.0" stroke="#c0c0c0" stroke-width="1.2"/>
<line x1="576.2" y1="479.0" x2="576.2" y2="481.3" stroke="#c0c0c0" stroke-width="1.1"/>
<line x1="576.2" y1="481.3" x2="576.2" y2="493.1" stroke="#ff0000" stroke-width="1.05"/>
<path d="M571.80,466.50 L571.80,462.50 M571.80,466.50 L575.60,465.26 M571.80,466.50 L574.15,469.74 M571.80,466.50 L569.45,469.74 M571.80,466.50 L568.00,465.26 " stroke="#c0c0c0" stroke-width="0.85" fill="none" stroke-linecap="round"/>
<line x1="576.2" y1="428.9" x2="576.2" y2="460.3" stroke="#800040" stroke-width="1.05"/>
<line x1="576.2" y1="493.1" x2="576.2" y2="505.2" stroke="#800040" stroke-width="1.05"/>
<line x1="564.9" y1="505.2" x2="587.5" y2="505.2" stroke="#ff0000" stroke-width="1.1"/>
<line x1="568.2" y1="508.4" x2="584.2" y2="508.4" stroke="#ff0000" stroke-width="1.1"/>
<line x1="571.7" y1="511.7" x2="580.7" y2="511.7" stroke="#ff0000" stroke-width="1.1"/>
<line x1="574.7" y1="514.9" x2="577.7" y2="514.9" stroke="#ff0000" stroke-width="1.1"/>
<text x="521.6" y="470.4" fill="#000080" font-size="9.75" stroke="#000080" stroke-width="0.2">CP146</text>
<text x="521.6" y="481.0" fill="#0000ff" font-size="9.75" stroke="#0000ff" stroke-width="0.2">4.7uF</text>
<text x="521.6" y="492.0" fill="#ff00ff" font-size="9.75" stroke="#ff00ff" stroke-width="0.2">Dummy</text>
<text transform="translate(527.5,578.5) rotate(-90)" x="0" y="3.5" fill="#800000" font-size="9.75" text-anchor="start" stroke="#800000" stroke-width="0.2">6.3V, X5R, +/-10%</text>
<text x="587.2" y="470.4" fill="#000080" font-size="9.75" stroke="#000080" stroke-width="0.2">CP130</text>
<text x="587.2" y="481.0" fill="#0000ff" font-size="9.75" stroke="#0000ff" stroke-width="0.2">0.1uF</text>
<text x="587.2" y="492.0" fill="#ff00ff" font-size="9.75" stroke="#ff00ff" stroke-width="0.2">Dummy</text>
<text transform="translate(593.1,574.0) rotate(-90)" x="0" y="3.5" fill="#800000" font-size="9.75" text-anchor="start" stroke="#800000" stroke-width="0.2">16V, X7R, +/-10%</text>
<line x1="696.5" y1="439.0" x2="696.5" y2="451.0" stroke="#ff0000" stroke-width="1.05"/>
<line x1="696.5" y1="451.0" x2="696.5" y2="483.0" stroke="#0000ff" stroke-width="1.2"/>
<polygon points="685.0,461.5 708.0,461.5 696.5,471.8" fill="#0000ff"/>
<line x1="685.0" y1="472.4" x2="708.0" y2="472.4" stroke="#0000ff" stroke-width="1.3"/>
<line x1="696.5" y1="483.0" x2="696.5" y2="495.0" stroke="#ff0000" stroke-width="1.05"/>
<polyline points="696.5,495.0 696.5,592.8 379.5,592.8 379.5,548.0" stroke="#800040" stroke-width="1.05" fill="none" stroke-linejoin="miter"/>
<text transform="translate(690.5,439.7) rotate(-90)" x="0" y="3.5" fill="#000000" font-size="9.75" text-anchor="middle" stroke="#000000" stroke-width="0.2">A</text>
<text transform="translate(690.5,494.0) rotate(-90)" x="0" y="3.5" fill="#000000" font-size="9.75" text-anchor="middle" stroke="#000000" stroke-width="0.2">C</text>
<text x="714.4" y="460.3" fill="#000080" font-size="9.75" stroke="#000080" stroke-width="0.2">QP120</text>
<text x="714.4" y="472.8" fill="#000080" font-size="9.75" stroke="#000080" stroke-width="0.2">B130LAW-7-F</text>
<text x="81.5" y="509.3" fill="#ff0000" font-size="9.75" stroke="#ff0000" stroke-width="0.2">(29)</text>
<text x="109.8" y="509.3" fill="#ff0000" font-size="9.75" stroke="#ff0000" stroke-width="0.2">O_SUS_5VON</text>
<polyline points="181.9,499.5 187.7,505.5 181.9,511.2" stroke="#ff0000" stroke-width="1.2" fill="none" stroke-linejoin="miter"/>
<polyline points="187.7,499.5 193.4,505.5 187.7,511.2" stroke="#ff0000" stroke-width="1.2" fill="none" stroke-linejoin="miter"/>
<line x1="193.4" y1="505.5" x2="225.9" y2="505.5" stroke="#800040" stroke-width="1.05"/>
<line x1="225.9" y1="505.5" x2="237.8" y2="505.5" stroke="#ff0000" stroke-width="1.05"/>
<line x1="258.8" y1="505.5" x2="270.7" y2="505.5" stroke="#ff0000" stroke-width="1.05"/>
<polyline points="237.8,505.5 240.4,509.9 243.7,501.4 246.9,509.9 250.3,501.4 253.4,509.9 256.7,501.4 258.8,505.5" stroke="#0000ff" stroke-width="1.4" fill="none" stroke-linejoin="miter"/>
<path d="M236.40,497.90 L232.40,497.90 M236.40,497.90 L235.16,494.10 M236.40,497.90 L239.64,495.55 M236.40,497.90 L239.64,500.25 M236.40,497.90 L235.16,501.70 " stroke="#0000ff" stroke-width="0.95" fill="none" stroke-linecap="round"/>
<line x1="270.7" y1="505.5" x2="346.8" y2="505.5" stroke="#800040" stroke-width="1.05"/>
<line x1="346.8" y1="505.5" x2="358.0" y2="505.5" stroke="#ff0000" stroke-width="1.05"/>
<rect x="204.2" y="483.4" width="88.2" height="44.1" fill="none" stroke="#0080ff" stroke-width="1.1" stroke-dasharray="3.2 1.3 0.9 1.3"/>
<text x="193.9" y="503.2" fill="#000080" font-size="9.75" stroke="#000080" stroke-width="0.2">RP793</text>
<text x="259.5" y="503.2" fill="#000080" font-size="9.75" stroke="#000080" stroke-width="0.2">33.2kohm</text>
<text x="259.5" y="524.9" fill="#800000" font-size="9.75" stroke="#800000" stroke-width="0.2">+/-1%</text>
<g transform="translate(379.5,515.3)"><circle cx="0" cy="0" r="21.8" fill="none" stroke="#0000ff" stroke-width="1.2"/><line x1="0" y1="-22" x2="0" y2="-11" stroke="#0000ff" stroke-width="1.2"/><line x1="0" y1="11" x2="0" y2="22" stroke="#0000ff" stroke-width="1.2"/><line x1="0" y1="-11" x2="11" y2="-11" stroke="#0000ff" stroke-width="1.2"/><line x1="11" y1="-11" x2="11" y2="11" stroke="#0000ff" stroke-width="1.2"/><line x1="0" y1="11" x2="11" y2="11" stroke="#0000ff" stroke-width="1.2"/><circle cx="0" cy="-11" r="1.3" fill="#0000ff"/><circle cx="0" cy="11" r="1.3" fill="#0000ff"/><line x1="-12.3" y1="-10.5" x2="-12.3" y2="11" stroke="#0000ff" stroke-width="2.2"/><line x1="-16.6" y1="-10.5" x2="-16.6" y2="11" stroke="#0000ff" stroke-width="1.3"/><line x1="-12.3" y1="-8.8" x2="0" y2="-8.8" stroke="#0000ff" stroke-width="1.2"/><line x1="-12.3" y1="9.6" x2="0" y2="9.6" stroke="#0000ff" stroke-width="1.2"/><line x1="-12.3" y1="0" x2="0" y2="0" stroke="#0000ff" stroke-width="1.2"/><line x1="0" y1="-11" x2="0" y2="0" stroke="#0000ff" stroke-width="1.2"/><polygon points="-8.6,-2.6 -8.6,2.6 -2.6,0" fill="#0000ff"/><line x1="-21" y1="-10.7" x2="-16.6" y2="-10.7" stroke="#0000ff" stroke-width="1.2"/><line x1="5.5" y1="-2.8" x2="16.6" y2="-2.8" stroke="#0000ff" stroke-width="1.2"/><polygon points="5.6,3.4 16.6,3.4 11,-2.8" fill="#0000ff"/></g>
<line x1="379.5" y1="537.3" x2="379.5" y2="548.0" stroke="#ff0000" stroke-width="1.05"/>
<text x="342.0" y="503.0" fill="#000000" font-size="9.75" stroke="#000000" stroke-width="0.2">G</text>
<text transform="translate(373.7,483.5) rotate(-90)" x="0" y="3.5" fill="#000000" font-size="9.75" text-anchor="middle" stroke="#000000" stroke-width="0.2">S</text>
<text transform="translate(373.7,549.0) rotate(-90)" x="0" y="3.5" fill="#000000" font-size="9.75" text-anchor="middle" stroke="#000000" stroke-width="0.2">D</text>
<text x="325.0" y="524.7" fill="#000080" font-size="9.75" stroke="#000080" stroke-width="0.2">QP61</text>
<text x="314.0" y="535.8" fill="#000080" font-size="9.75" stroke="#000080" stroke-width="0.2">FDN340P</text>
<line x1="291.9" y1="548.6" x2="291.9" y2="556.7" stroke="#ff0000" stroke-width="1.05"/>
<polygon points="288.2,555.8 295.5,555.8 291.9,560.6" fill="#ff0000"/>
<line x1="281.9" y1="562.2" x2="301.9" y2="562.2" stroke="#0000ff" stroke-width="2.6"/>
<line x1="282.7" y1="567.3" x2="301.1" y2="567.3" stroke="#0000ff" stroke-width="1.2"/>
<line x1="291.9" y1="567.3" x2="291.9" y2="569.6" stroke="#0000ff" stroke-width="1.1"/>
<line x1="291.9" y1="569.6" x2="291.9" y2="581.4" stroke="#ff0000" stroke-width="1.05"/>
<path d="M287.45,554.80 L287.45,550.80 M287.45,554.80 L291.25,553.56 M287.45,554.80 L289.80,558.04 M287.45,554.80 L285.10,558.04 M287.45,554.80 L283.65,553.56 " stroke="#0000ff" stroke-width="0.95" fill="none" stroke-linecap="round"/>
<line x1="291.9" y1="505.5" x2="291.9" y2="548.6" stroke="#800040" stroke-width="1.05"/>
<line x1="291.9" y1="581.4" x2="291.9" y2="603.1" stroke="#800040" stroke-width="1.05"/>
<line x1="280.6" y1="603.1" x2="303.2" y2="603.1" stroke="#ff0000" stroke-width="1.1"/>
<line x1="283.9" y1="606.3" x2="299.9" y2="606.3" stroke="#ff0000" stroke-width="1.1"/>
<line x1="287.4" y1="609.6" x2="296.4" y2="609.6" stroke="#ff0000" stroke-width="1.1"/>
<line x1="290.4" y1="612.8" x2="293.4" y2="612.8" stroke="#ff0000" stroke-width="1.1"/>
<rect x="258.8" y="549.0" width="88.0" height="32.9" fill="none" stroke="#9933ff" stroke-width="1.1" stroke-dasharray="3.2 1.3 0.9 1.3"/>
<text x="313.9" y="558.0" fill="#000080" font-size="9.75" stroke="#000080" stroke-width="0.2">CP133</text>
<text x="313.9" y="569.1" fill="#0000ff" font-size="9.75" stroke="#0000ff" stroke-width="0.2">2.2nF</text>
<text x="313.9" y="580.3" fill="#800000" font-size="9.75" stroke="#800000" stroke-width="0.2">50V, X7R,+/-10%</text>
<text x="467.4" y="547.3" fill="#000000" font-size="9.75" stroke="#000000" stroke-width="0.2">+5V_S5</text>
<circle cx="477.6" cy="552.5" r="3.3" fill="none" stroke="#ff0000" stroke-width="1.1"/>
<line x1="477.6" y1="555.8" x2="477.6" y2="605.0" stroke="#800040" stroke-width="1.05"/>
<line x1="477.6" y1="605.0" x2="477.6" y2="612.0" stroke="#ff0000" stroke-width="1.05"/>
<path d="M473.20,608.60 L473.20,604.60 M473.20,608.60 L477.00,607.36 M473.20,608.60 L475.55,611.84 M473.20,608.60 L470.85,611.84 M473.20,608.60 L469.40,607.36 " stroke="#c0c0c0" stroke-width="0.9" fill="none" stroke-linecap="round"/>
<text x="488.8" y="602.1" fill="#000080" font-size="9.75" stroke="#000080" stroke-width="0.2">CP120</text>
<text x="488.8" y="613.2" fill="#0000ff" font-size="9.75" stroke="#0000ff" stroke-width="0.2">4.7uF</text>
<text transform="translate(1145.1,71.8) scale(1,0.915)" x="0" y="0" fill="#0000ff" font-size="17" font-weight="bold" style="font-family:&quot;Liberation Mono&quot;">+3V</text>
<text x="1080.0" y="110.2" fill="#000000" font-size="9.75" stroke="#000000" stroke-width="0.2">+5VSB</text>
<circle cx="1101.0" cy="115.2" r="3.3" fill="none" stroke="#ff0000" stroke-width="1.1"/>
<line x1="1101.0" y1="118.5" x2="1101.0" y2="155.0" stroke="#800040" stroke-width="1.05"/>
<line x1="1101.0" y1="155.0" x2="1101.0" y2="166.6" stroke="#ff0000" stroke-width="1.05"/>
<line x1="1101.0" y1="187.7" x2="1101.0" y2="200.0" stroke="#ff0000" stroke-width="1.05"/>
<polyline points="1101.0,166.6 1096.8,169.2 1105.3,172.5 1096.8,175.8 1105.3,179.2 1096.8,182.3 1105.3,185.6 1101.0,187.7" stroke="#0000ff" stroke-width="1.4" fill="none" stroke-linejoin="miter"/>
<path d="M1108.30,163.60 L1108.30,159.60 M1108.30,163.60 L1112.10,162.36 M1108.30,163.60 L1110.65,166.84 M1108.30,163.60 L1105.95,166.84 M1108.30,163.60 L1104.50,162.36 " stroke="#0000ff" stroke-width="0.95" fill="none" stroke-linecap="round"/>
<line x1="1101.0" y1="200.0" x2="1101.0" y2="417.0" stroke="#800040" stroke-width="1.05"/>
<text x="1112.8" y="175.2" fill="#000080" font-size="9.75" stroke="#000080" stroke-width="0.2">RP170</text>
<text x="1112.8" y="186.1" fill="#000080" font-size="9.75" stroke="#000080" stroke-width="0.2">10K</text>
<line x1="1210.5" y1="166.4" x2="1363.8" y2="166.4" stroke="#800040" stroke-width="1.05"/>
<line x1="1363.8" y1="166.4" x2="1375.0" y2="166.4" stroke="#ff0000" stroke-width="1.05"/>
<line x1="1396.1" y1="166.4" x2="1407.8" y2="166.4" stroke="#ff0000" stroke-width="1.05"/>
<polyline points="1375.0,166.4 1377.6,170.8 1380.9,162.3 1384.2,170.8 1387.6,162.3 1390.7,170.8 1394.0,162.3 1396.1,166.4" stroke="#c0c0c0" stroke-width="1.4" fill="none" stroke-linejoin="miter"/>
<circle cx="1375" cy="163" r="1" fill="#c0c0c0"/>
<line x1="1407.8" y1="166.4" x2="1421.0" y2="166.4" stroke="#800040" stroke-width="1.05"/>
<text x="1407.9" y="175.5" fill="#ff00ff" font-size="9.75" stroke="#ff00ff" stroke-width="0.2">Dummy</text>
<line x1="1210.5" y1="176.7" x2="1210.5" y2="184.8" stroke="#ff0000" stroke-width="1.05"/>
<polygon points="1206.9,183.9 1214.1,183.9 1210.5,188.7" fill="#ff0000"/>
<line x1="1200.5" y1="190.3" x2="1220.5" y2="190.3" stroke="#0000ff" stroke-width="2.6"/>
<line x1="1201.3" y1="195.4" x2="1219.7" y2="195.4" stroke="#0000ff" stroke-width="1.2"/>
<line x1="1210.5" y1="195.4" x2="1210.5" y2="197.7" stroke="#0000ff" stroke-width="1.1"/>
<line x1="1210.5" y1="197.7" x2="1210.5" y2="209.5" stroke="#ff0000" stroke-width="1.05"/>
<path d="M1206.10,182.90 L1206.10,178.90 M1206.10,182.90 L1209.90,181.66 M1206.10,182.90 L1208.45,186.14 M1206.10,182.90 L1203.75,186.14 M1206.10,182.90 L1202.30,181.66 " stroke="#0000ff" stroke-width="0.95" fill="none" stroke-linecap="round"/>
<line x1="1210.5" y1="166.4" x2="1210.5" y2="176.7" stroke="#800040" stroke-width="1.05"/>
<line x1="1210.5" y1="209.5" x2="1210.5" y2="220.6" stroke="#800040" stroke-width="1.05"/>
<line x1="1199.2" y1="220.6" x2="1221.8" y2="220.6" stroke="#ff0000" stroke-width="1.1"/>
<line x1="1202.5" y1="223.8" x2="1218.5" y2="223.8" stroke="#ff0000" stroke-width="1.1"/>
<line x1="1206.0" y1="227.1" x2="1215.0" y2="227.1" stroke="#ff0000" stroke-width="1.1"/>
<line x1="1209.0" y1="230.3" x2="1212.0" y2="230.3" stroke="#ff0000" stroke-width="1.1"/>
<line x1="1265.5" y1="176.7" x2="1265.5" y2="184.8" stroke="#ff0000" stroke-width="1.05"/>
<polygon points="1261.9,183.9 1269.1,183.9 1265.5,188.7" fill="#ff0000"/>
<line x1="1255.5" y1="190.3" x2="1275.5" y2="190.3" stroke="#c0c0c0" stroke-width="2.6"/>
<line x1="1256.3" y1="195.4" x2="1274.7" y2="195.4" stroke="#c0c0c0" stroke-width="1.2"/>
<line x1="1265.5" y1="195.4" x2="1265.5" y2="197.7" stroke="#c0c0c0" stroke-width="1.1"/>
<line x1="1265.5" y1="197.7" x2="1265.5" y2="209.5" stroke="#ff0000" stroke-width="1.05"/>
<path d="M1261.10,182.90 L1261.10,178.90 M1261.10,182.90 L1264.90,181.66 M1261.10,182.90 L1263.45,186.14 M1261.10,182.90 L1258.75,186.14 M1261.10,182.90 L1257.30,181.66 " stroke="#c0c0c0" stroke-width="0.85" fill="none" stroke-linecap="round"/>
<line x1="1265.5" y1="166.4" x2="1265.5" y2="176.7" stroke="#800040" stroke-width="1.05"/>
<line x1="1265.5" y1="209.5" x2="1265.5" y2="220.6" stroke="#800040" stroke-width="1.05"/>
<line x1="1254.2" y1="220.6" x2="1276.8" y2="220.6" stroke="#ff0000" stroke-width="1.1"/>
<line x1="1257.5" y1="223.8" x2="1273.5" y2="223.8" stroke="#ff0000" stroke-width="1.1"/>
<line x1="1261.0" y1="227.1" x2="1270.0" y2="227.1" stroke="#ff0000" stroke-width="1.1"/>
<line x1="1264.0" y1="230.3" x2="1267.0" y2="230.3" stroke="#ff0000" stroke-width="1.1"/>
<text x="1222.0" y="185.9" fill="#000080" font-size="9.75" stroke="#000080" stroke-width="0.2">CP132</text>
<text x="1222.0" y="196.8" fill="#0000ff" font-size="9.75" stroke="#0000ff" stroke-width="0.2">0.1uF</text>
<text transform="translate(1226.5,289.3) rotate(-90)" x="0" y="3.5" fill="#800000" font-size="9.75" text-anchor="start" stroke="#800000" stroke-width="0.2">16V, X7R, +/-10%</text>
<text x="1276.5" y="185.9" fill="#000080" font-size="9.75" stroke="#000080" stroke-width="0.2">CP45</text>
<text x="1276.5" y="196.8" fill="#0000ff" font-size="9.75" stroke="#0000ff" stroke-width="0.2">4.7uF</text>
<text x="1265.8" y="208.5" fill="#ff00ff" font-size="9.75" stroke="#ff00ff" stroke-width="0.2">Dummy</text>
<text transform="translate(1282.4,295.0) rotate(-90)" x="0" y="3.5" fill="#800000" font-size="9.75" text-anchor="start" stroke="#800000" stroke-width="0.2">6.3V, X5R, +/-10%</text>
<line x1="1309.0" y1="150.0" x2="1309.0" y2="286.0" stroke="#800040" stroke-width="1.05"/>
<line x1="1309.0" y1="286.0" x2="1309.0" y2="297.3" stroke="#ff0000" stroke-width="1.05"/>
<text transform="translate(1303.2,286.7) rotate(-90)" x="0" y="3.5" fill="#000000" font-size="9.75" text-anchor="middle" stroke="#000000" stroke-width="0.2">S</text>
<text transform="translate(948.2,254.0) scale(0.962,1)" x="0" y="0" fill="#008000" font-size="12.5" font-weight="bold">20120426: Stuffed RP794</text>
<text x="825.8" y="312.0" fill="#ff0000" font-size="9.75" stroke="#ff0000" stroke-width="0.2">(29)</text>
<text x="854.2" y="312.0" fill="#ff0000" font-size="9.75" stroke="#ff0000" stroke-width="0.2">O_PCIAUX_CTRL</text>
<polyline points="947.9,302.7 953.7,308.7 947.9,314.4" stroke="#ff0000" stroke-width="1.2" fill="none" stroke-linejoin="miter"/>
<polyline points="953.7,302.7 959.4,308.7 953.7,314.4" stroke="#ff0000" stroke-width="1.2" fill="none" stroke-linejoin="miter"/>
<line x1="959.4" y1="308.7" x2="992.0" y2="308.7" stroke="#800040" stroke-width="1.05"/>
<line x1="992.0" y1="308.7" x2="1003.0" y2="308.7" stroke="#ff0000" stroke-width="1.05"/>
<line x1="1024.0" y1="308.7" x2="1035.0" y2="308.7" stroke="#ff0000" stroke-width="1.05"/>
<polyline points="1003.0,308.7 1005.6,313.1 1008.9,304.6 1012.1,313.1 1015.5,304.6 1018.6,313.1 1021.9,304.6 1024.0,308.7" stroke="#0000ff" stroke-width="1.4" fill="none" stroke-linejoin="miter"/>
<path d="M1026.00,316.00 L1030.00,316.00 M1026.00,316.00 L1027.24,319.80 M1026.00,316.00 L1022.76,318.35 M1026.00,316.00 L1022.76,313.65 M1026.00,316.00 L1027.24,312.20 " stroke="#0000ff" stroke-width="0.95" fill="none" stroke-linecap="round"/>
<line x1="1035.0" y1="308.7" x2="1134.0" y2="308.7" stroke="#800040" stroke-width="1.05"/>
<line x1="1134.0" y1="308.7" x2="1145.0" y2="308.7" stroke="#ff0000" stroke-width="1.05"/>
<line x1="1167.0" y1="308.7" x2="1178.0" y2="308.7" stroke="#ff0000" stroke-width="1.05"/>
<polyline points="1145.0,308.7 1147.8,313.1 1151.2,304.6 1154.6,313.1 1158.1,304.6 1161.4,313.1 1164.8,304.6 1167.0,308.7" stroke="#0000ff" stroke-width="1.4" fill="none" stroke-linejoin="miter"/>
<path d="M1144.20,302.00 L1140.20,302.00 M1144.20,302.00 L1142.96,298.20 M1144.20,302.00 L1147.44,299.65 M1144.20,302.00 L1147.44,304.35 M1144.20,302.00 L1142.96,305.80 " stroke="#0000ff" stroke-width="0.95" fill="none" stroke-linecap="round"/>
<line x1="1178.0" y1="308.7" x2="1275.5" y2="308.7" stroke="#800040" stroke-width="1.05"/>
<line x1="1275.5" y1="308.7" x2="1287.0" y2="308.7" stroke="#ff0000" stroke-width="1.05"/>
<rect x="969.5" y="264.7" width="77.2" height="76.6" fill="none" stroke="#008080" stroke-width="1.1" stroke-dasharray="3 1.1 1 1.1 2 0.8"/>
<text x="970.2" y="306.5" fill="#000080" font-size="9.75" stroke="#000080" stroke-width="0.2">RP794</text>
<text x="1035.8" y="306.5" fill="#000080" font-size="9.75" stroke="#000080" stroke-width="0.2">0</text>
<text x="1145.0" y="328.5" fill="#000080" font-size="9.75" stroke="#000080" stroke-width="0.2">RP171</text>
<text x="1145.0" y="339.3" fill="#000080" font-size="9.75" stroke="#000080" stroke-width="0.2">20K</text>
<text x="1145.0" y="350.0" fill="#800000" font-size="9.75" stroke="#800000" stroke-width="0.2">+/-1%</text>
<g transform="translate(1309.0,319.3)"><circle cx="0" cy="0" r="21.8" fill="none" stroke="#0000ff" stroke-width="1.2"/><line x1="0" y1="-22" x2="0" y2="-11" stroke="#0000ff" stroke-width="1.2"/><line x1="0" y1="11" x2="0" y2="22" stroke="#0000ff" stroke-width="1.2"/><line x1="0" y1="-11" x2="11" y2="-11" stroke="#0000ff" stroke-width="1.2"/><line x1="11" y1="-11" x2="11" y2="11" stroke="#0000ff" stroke-width="1.2"/><line x1="0" y1="11" x2="11" y2="11" stroke="#0000ff" stroke-width="1.2"/><circle cx="0" cy="-11" r="1.3" fill="#0000ff"/><circle cx="0" cy="11" r="1.3" fill="#0000ff"/><line x1="-12.3" y1="-10.5" x2="-12.3" y2="11" stroke="#0000ff" stroke-width="2.2"/><line x1="-16.6" y1="-10.5" x2="-16.6" y2="11" stroke="#0000ff" stroke-width="1.3"/><line x1="-12.3" y1="-8.8" x2="0" y2="-8.8" stroke="#0000ff" stroke-width="1.2"/><line x1="-12.3" y1="9.6" x2="0" y2="9.6" stroke="#0000ff" stroke-width="1.2"/><line x1="-12.3" y1="0" x2="0" y2="0" stroke="#0000ff" stroke-width="1.2"/><line x1="0" y1="-11" x2="0" y2="0" stroke="#0000ff" stroke-width="1.2"/><polygon points="-8.6,-2.6 -8.6,2.6 -2.6,0" fill="#0000ff"/><line x1="-21" y1="-10.7" x2="-16.6" y2="-10.7" stroke="#0000ff" stroke-width="1.2"/><line x1="5.5" y1="-2.8" x2="16.6" y2="-2.8" stroke="#0000ff" stroke-width="1.2"/><polygon points="5.6,3.4 16.6,3.4 11,-2.8" fill="#0000ff"/></g>
<line x1="1309.0" y1="341.3" x2="1309.0" y2="352.0" stroke="#ff0000" stroke-width="1.05"/>
<polyline points="1309.0,352.0 1309.0,385.1 1421.0,385.1" stroke="#800040" stroke-width="1.05" fill="none" stroke-linejoin="miter"/>
<text x="1272.0" y="305.9" fill="#000000" font-size="9.75" stroke="#000000" stroke-width="0.2">G</text>
<text transform="translate(1303.2,351.7) rotate(-90)" x="0" y="3.5" fill="#000000" font-size="9.75" text-anchor="middle" stroke="#000000" stroke-width="0.2">D</text>
<text x="1331.0" y="316.8" fill="#000080" font-size="9.75" stroke="#000080" stroke-width="0.2">QP73</text>
<text x="1331.0" y="328.0" fill="#000080" font-size="9.75" stroke="#000080" stroke-width="0.2">FDN340P</text>
<line x1="1210.5" y1="373.2" x2="1210.5" y2="381.3" stroke="#ff0000" stroke-width="1.05"/>
<polygon points="1206.9,380.4 1214.1,380.4 1210.5,385.2" fill="#ff0000"/>
<line x1="1200.5" y1="386.8" x2="1220.5" y2="386.8" stroke="#0000ff" stroke-width="2.6"/>
<line x1="1201.3" y1="391.9" x2="1219.7" y2="391.9" stroke="#0000ff" stroke-width="1.2"/>
<line x1="1210.5" y1="391.9" x2="1210.5" y2="394.2" stroke="#0000ff" stroke-width="1.1"/>
<line x1="1210.5" y1="394.2" x2="1210.5" y2="406.0" stroke="#ff0000" stroke-width="1.05"/>
<path d="M1206.10,379.40 L1206.10,375.40 M1206.10,379.40 L1209.90,378.16 M1206.10,379.40 L1208.45,382.64 M1206.10,379.40 L1203.75,382.64 M1206.10,379.40 L1202.30,378.16 " stroke="#0000ff" stroke-width="0.95" fill="none" stroke-linecap="round"/>
<line x1="1210.5" y1="308.7" x2="1210.5" y2="373.2" stroke="#800040" stroke-width="1.05"/>
<line x1="1210.5" y1="406.0" x2="1210.5" y2="440.0" stroke="#800040" stroke-width="1.05"/>
<line x1="1199.2" y1="440.0" x2="1221.8" y2="440.0" stroke="#ff0000" stroke-width="1.1"/>
<line x1="1202.5" y1="443.2" x2="1218.5" y2="443.2" stroke="#ff0000" stroke-width="1.1"/>
<line x1="1206.0" y1="446.5" x2="1215.0" y2="446.5" stroke="#ff0000" stroke-width="1.1"/>
<line x1="1209.0" y1="449.7" x2="1212.0" y2="449.7" stroke="#ff0000" stroke-width="1.1"/>
<text x="1221.5" y="371.8" fill="#000080" font-size="9.75" stroke="#000080" stroke-width="0.2">CP144</text>
<text x="1221.5" y="382.9" fill="#0000ff" font-size="9.75" stroke="#0000ff" stroke-width="0.2">1uF</text>
<text x="1221.5" y="394.3" fill="#800000" font-size="9.75" stroke="#800000" stroke-width="0.2">+/-10%</text>
<text transform="translate(915.3,396.0) scale(0.958,1)" x="0" y="0" fill="#008000" font-size="12.5" font-weight="bold">20120426: Dummy QP71</text>
<line x1="1057.5" y1="308.7" x2="1057.5" y2="417.0" stroke="#800040" stroke-width="1.05"/>
<line x1="1057.5" y1="417.0" x2="1057.5" y2="429.0" stroke="#ff0000" stroke-width="1.05"/>
<line x1="1101.0" y1="417.0" x2="1101.0" y2="429.0" stroke="#ff0000" stroke-width="1.05"/>
<g transform="translate(1057.1,450.4)"><circle cx="0" cy="0" r="21.8" fill="none" stroke="#c0c0c0" stroke-width="1.2"/><line x1="0" y1="-22" x2="0" y2="-11" stroke="#c0c0c0" stroke-width="1.2"/><line x1="0" y1="11" x2="0" y2="22" stroke="#c0c0c0" stroke-width="1.2"/><line x1="0" y1="-11" x2="11" y2="-11" stroke="#c0c0c0" stroke-width="1.2"/><line x1="11" y1="-11" x2="11" y2="11" stroke="#c0c0c0" stroke-width="1.2"/><line x1="0" y1="11" x2="11" y2="11" stroke="#c0c0c0" stroke-width="1.2"/><circle cx="0" cy="-11" r="1.3" fill="#c0c0c0"/><circle cx="0" cy="11" r="1.3" fill="#c0c0c0"/><line x1="-12.3" y1="-10.5" x2="-12.3" y2="11" stroke="#c0c0c0" stroke-width="2.2"/><line x1="-16.6" y1="-10.5" x2="-16.6" y2="11" stroke="#c0c0c0" stroke-width="1.3"/><line x1="-12.3" y1="-8.8" x2="0" y2="-8.8" stroke="#c0c0c0" stroke-width="1.2"/><line x1="-12.3" y1="9.6" x2="0" y2="9.6" stroke="#c0c0c0" stroke-width="1.2"/><line x1="-12.3" y1="0.8" x2="0" y2="0.8" stroke="#c0c0c0" stroke-width="1.2"/><line x1="0" y1="0.8" x2="0" y2="11" stroke="#c0c0c0" stroke-width="1.2"/><polygon points="-6.2,-1.8 -6.2,3.4 -11.8,0.8" fill="#c0c0c0"/><line x1="-21" y1="11.2" x2="-16.6" y2="11.2" stroke="#c0c0c0" stroke-width="1.2"/><line x1="5.5" y1="-2.8" x2="16.6" y2="-2.8" stroke="#c0c0c0" stroke-width="1.2"/><polygon points="5.6,3.4 16.6,3.4 11,-2.8" fill="#c0c0c0"/></g>
<g transform="translate(1101.0,450.4) scale(-1,1)"><circle cx="0" cy="0" r="21.8" fill="none" stroke="#c0c0c0" stroke-width="1.2"/><line x1="0" y1="-22" x2="0" y2="-11" stroke="#c0c0c0" stroke-width="1.2"/><line x1="0" y1="11" x2="0" y2="22" stroke="#c0c0c0" stroke-width="1.2"/><line x1="0" y1="-11" x2="11" y2="-11" stroke="#c0c0c0" stroke-width="1.2"/><line x1="11" y1="-11" x2="11" y2="11" stroke="#c0c0c0" stroke-width="1.2"/><line x1="0" y1="11" x2="11" y2="11" stroke="#c0c0c0" stroke-width="1.2"/><circle cx="0" cy="-11" r="1.3" fill="#c0c0c0"/><circle cx="0" cy="11" r="1.3" fill="#c0c0c0"/><line x1="-12.3" y1="-10.5" x2="-12.3" y2="11" stroke="#c0c0c0" stroke-width="2.2"/><line x1="-16.6" y1="-10.5" x2="-16.6" y2="11" stroke="#c0c0c0" stroke-width="1.3"/><line x1="-12.3" y1="-8.8" x2="0" y2="-8.8" stroke="#c0c0c0" stroke-width="1.2"/><line x1="-12.3" y1="9.6" x2="0" y2="9.6" stroke="#c0c0c0" stroke-width="1.2"/><line x1="-12.3" y1="0.8" x2="0" y2="0.8" stroke="#c0c0c0" stroke-width="1.2"/><line x1="0" y1="0.8" x2="0" y2="11" stroke="#c0c0c0" stroke-width="1.2"/><polygon points="-6.2,-1.8 -6.2,3.4 -11.8,0.8" fill="#c0c0c0"/><line x1="-21" y1="11.2" x2="-16.6" y2="11.2" stroke="#c0c0c0" stroke-width="1.2"/><line x1="5.5" y1="-2.8" x2="16.6" y2="-2.8" stroke="#c0c0c0" stroke-width="1.2"/><polygon points="5.6,3.4 16.6,3.4 11,-2.8" fill="#c0c0c0"/></g>
<rect x="1013.4" y="406.7" width="153.9" height="98.1" fill="none" stroke="#008080" stroke-width="1.1" stroke-dasharray="3 1.1 1 1.1 2 0.8"/>
<text transform="translate(1051.9,417.7) rotate(-90)" x="0" y="3.5" fill="#000000" font-size="9.75" text-anchor="middle" stroke="#000000" stroke-width="0.2">6</text>
<text transform="translate(1095.5,417.7) rotate(-90)" x="0" y="3.5" fill="#000000" font-size="9.75" text-anchor="middle" stroke="#000000" stroke-width="0.2">3</text>
<text transform="translate(1051.9,483.0) rotate(-90)" x="0" y="3.5" fill="#000000" font-size="9.75" text-anchor="middle" stroke="#000000" stroke-width="0.2">1</text>
<text transform="translate(1095.5,483.0) rotate(-90)" x="0" y="3.5" fill="#000000" font-size="9.75" text-anchor="middle" stroke="#000000" stroke-width="0.2">4</text>
<text x="1022.8" y="458.5" fill="#000000" font-size="9.75" stroke="#000000" stroke-width="0.2">2</text>
<text x="1131.0" y="459.0" fill="#000000" font-size="9.75" stroke="#000000" stroke-width="0.2">5</text>
<text x="1123.2" y="438.2" fill="#000080" font-size="9.75" stroke="#000080" stroke-width="0.2">QP71</text>
<text x="1123.2" y="449.4" fill="#ff00ff" font-size="9.75" stroke="#ff00ff" stroke-width="0.2">Dummy</text>
<text x="1112.0" y="480.7" fill="#000080" font-size="9.75" stroke="#000080" stroke-width="0.2">2N7002DW</text>
<text x="822.0" y="465.0" fill="#ff0000" font-size="9.75" stroke="#ff0000" stroke-width="0.2">(23,29)</text>
<text x="864.9" y="465.0" fill="#ff0000" font-size="9.75" stroke="#ff0000" stroke-width="0.2">S_PCIAUX_GATE</text>
<polyline points="957.5,455.8 963.3,461.8 957.5,467.5" stroke="#ff0000" stroke-width="1.2" fill="none" stroke-linejoin="miter"/>
<polyline points="963.3,455.8 969.0,461.8 963.3,467.5" stroke="#ff0000" stroke-width="1.2" fill="none" stroke-linejoin="miter"/>
<line x1="969.0" y1="461.8" x2="1024.5" y2="461.8" stroke="#800040" stroke-width="1.05"/>
<line x1="1024.5" y1="461.8" x2="1030.0" y2="461.8" stroke="#ff0000" stroke-width="1.05"/>
<polygon points="1028.5,457.7 1028.5,465.2 1035.5,461.8" fill="#ff0000"/>
<line x1="1123.0" y1="461.8" x2="1133.0" y2="461.8" stroke="#ff0000" stroke-width="1.05"/>
<polygon points="1129.6,457.8 1129.6,465.3 1122.5,461.8" fill="#ff0000"/>
<polyline points="1133.0,461.8 1178.0,461.8 1178.0,538.1 970.0,538.1" stroke="#800040" stroke-width="1.05" fill="none" stroke-linejoin="miter"/>
<polygon points="1053.6,475.8 1060.6,475.8 1057.1,472.2" fill="#ff0000"/>
<line x1="1057.1" y1="472.5" x2="1057.1" y2="483.5" stroke="#ff0000" stroke-width="1.05"/>
<line x1="1057.1" y1="483.5" x2="1057.1" y2="516.4" stroke="#800040" stroke-width="1.05"/>
<line x1="1045.8" y1="516.4" x2="1068.4" y2="516.4" stroke="#ff0000" stroke-width="1.1"/>
<line x1="1049.1" y1="519.6" x2="1065.1" y2="519.6" stroke="#ff0000" stroke-width="1.1"/>
<line x1="1052.6" y1="522.9" x2="1061.6" y2="522.9" stroke="#ff0000" stroke-width="1.1"/>
<line x1="1055.6" y1="526.1" x2="1058.6" y2="526.1" stroke="#ff0000" stroke-width="1.1"/>
<polygon points="1097.5,475.8 1104.5,475.8 1101.0,472.2" fill="#ff0000"/>
<line x1="1101.0" y1="472.5" x2="1101.0" y2="483.5" stroke="#ff0000" stroke-width="1.05"/>
<line x1="1101.0" y1="483.5" x2="1101.0" y2="516.4" stroke="#800040" stroke-width="1.05"/>
<line x1="1089.8" y1="516.4" x2="1112.3" y2="516.4" stroke="#ff0000" stroke-width="1.1"/>
<line x1="1093.0" y1="519.6" x2="1109.0" y2="519.6" stroke="#ff0000" stroke-width="1.1"/>
<line x1="1096.5" y1="522.9" x2="1105.5" y2="522.9" stroke="#ff0000" stroke-width="1.1"/>
<line x1="1099.5" y1="526.1" x2="1102.5" y2="526.1" stroke="#ff0000" stroke-width="1.1"/>
<line x1="1199.2" y1="440.0" x2="1221.8" y2="440.0" stroke="#ff0000" stroke-width="1.1"/>
<line x1="1202.5" y1="443.2" x2="1218.5" y2="443.2" stroke="#ff0000" stroke-width="1.1"/>
<line x1="1206.0" y1="446.5" x2="1215.0" y2="446.5" stroke="#ff0000" stroke-width="1.1"/>
<line x1="1209.0" y1="449.7" x2="1212.0" y2="449.7" stroke="#ff0000" stroke-width="1.1"/>
<text x="812.5" y="542.0" fill="#ff0000" font-size="9.75" stroke="#ff0000" stroke-width="0.2">(23,29,51,61,64)</text>
<text x="897.6" y="542.0" fill="#ff0000" font-size="9.75" stroke="#ff0000" stroke-width="0.2">S_SLP_S4#</text>
<polyline points="958.5,532.1 964.3,538.1 958.5,543.9" stroke="#ff0000" stroke-width="1.2" fill="none" stroke-linejoin="miter"/>
<polyline points="964.3,532.1 970.0,538.1 964.3,543.9" stroke="#ff0000" stroke-width="1.2" fill="none" stroke-linejoin="miter"/>
<path d="M1420.6,63 Q1418.9,64.5 1418.9,66.8 Q1418.9,69.3 1420.6,70.6" fill="none" stroke="#0000ff" stroke-width="1.7"/>
<line x1="1320.0" y1="483.0" x2="1320.0" y2="611.0" stroke="#000000" stroke-width="2"/>
<line x1="1319.0" y1="483.6" x2="1421.0" y2="483.6" stroke="#000000" stroke-width="1.7"/>
<line x1="1320.0" y1="571.0" x2="1421.0" y2="571.0" stroke="#000000" stroke-width="2.2"/>
<text x="1330.5" y="590.7" fill="#000000" font-size="9.6" font-weight="bold">Title</text>
<g fill="none" stroke="#3a3ac8" stroke-width="1.1" stroke-linejoin="miter"><path d="M1332.3,496.1 L1351.9,496.1 A27.7,27.7 0 0 1 1377.1,515.4 L1404.5,496.1 L1414.6,504.2 L1393.3,519.9 L1395,522.2 L1417.4,506.5 L1423,510.5 L1423,519.5 L1404.5,530.6 L1406.2,533.4 L1423,522.5 L1423,538.2 L1404.5,551.6 L1377.1,530 A27.7,27.7 0 0 1 1351.9,551.6 L1332.3,551.6 Z"/><path d="M1347.4,514.9 L1351.9,514.9 A9.25,9.25 0 0 1 1351.9,533.4 L1347.4,533.4 Z"/></g>
<circle cx="292.0" cy="68.2" r="2.9" fill="#ff00ff"/>
<circle cx="390.1" cy="68.2" r="2.9" fill="#ff00ff"/>
<circle cx="379.5" cy="177.5" r="2.9" fill="#ff00ff"/>
<circle cx="466.9" cy="177.5" r="2.9" fill="#ff00ff"/>
<circle cx="598.2" cy="177.5" r="2.9" fill="#ff00ff"/>
<circle cx="313.7" cy="188.4" r="2.9" fill="#ff00ff"/>
<circle cx="313.7" cy="221.1" r="2.9" fill="#ff00ff"/>
<circle cx="466.9" cy="330.4" r="2.9" fill="#ff00ff"/>
<circle cx="554.5" cy="330.4" r="2.9" fill="#ff00ff"/>
<circle cx="379.5" cy="428.9" r="2.9" fill="#ff00ff"/>
<circle cx="510.8" cy="428.9" r="2.9" fill="#ff00ff"/>
<circle cx="291.9" cy="505.5" r="2.9" fill="#ff00ff"/>
<circle cx="313.6" cy="505.5" r="2.9" fill="#ff00ff"/>
<circle cx="477.6" cy="592.8" r="2.9" fill="#ff00ff"/>
<circle cx="1265.5" cy="166.4" r="2.9" fill="#ff00ff"/>
<circle cx="1309.0" cy="166.4" r="2.9" fill="#ff00ff"/>
<circle cx="1057.5" cy="308.7" r="2.9" fill="#ff00ff"/>
<circle cx="1101.0" cy="308.7" r="2.9" fill="#ff00ff"/>
<circle cx="1210.5" cy="308.7" r="2.9" fill="#ff00ff"/>
</g>
<rect x="1422" y="35.8" width="17" height="7.6" fill="#e4e7f0" stroke="#8c93ab" stroke-width="1.5"/>
<line x1="80" y1="619.8" x2="1145" y2="619.8" stroke="#8a8a8a" stroke-width="2.2"/>
<line x1="1430.5" y1="536.5" x2="1430.5" y2="552.5" stroke="#8a8a8a" stroke-width="2"/>
<rect x="54.5" y="611.5" width="8" height="15" fill="#e4e7f0" stroke="#8890a8" stroke-width="1"/>
<rect x="1399.5" y="585.5" width="40" height="42" fill="#fff" stroke="#e3e6ee"/>
<defs><linearGradient id="hg" x1="0" y1="0" x2="0" y2="1"><stop offset="0" stop-color="#c04af0"/><stop offset="1" stop-color="#2f58d8"/></linearGradient></defs>
<g>
 <path d="M1410.6,606.5 A9.5,10.5 0 0 1 1429.6,606.5" fill="none" stroke="url(#hg)" stroke-width="1.5"/>
 <ellipse cx="1409.8" cy="607.8" rx="2.2" ry="2.8" fill="#2f58d8"/>
 <ellipse cx="1430.2" cy="607.8" rx="2.2" ry="2.8" fill="#2f58d8"/>
 <rect x="1411.3" y="604" width="2.2" height="7.5" rx="1" fill="#b565f2"/>
 <rect x="1426.5" y="604" width="2.2" height="7.5" rx="1" fill="#b565f2"/>
 <text x="1420" y="610.8" font-size="7" fill="#9b55ee" text-anchor="middle" letter-spacing="1.2">AI</text>
 <path d="M1429.6,610.5 Q1428.5,616.3 1421.5,616.6" fill="none" stroke="#2f58d8" stroke-width="1.1"/>
 <ellipse cx="1420.5" cy="616.6" rx="2.3" ry="1.4" fill="#2f58d8"/>
</g>
</svg>
<div id="dlg">
 <div id="dlgh"><div id="dlgt">Search&amp;Replace</div>
 <svg style="position:absolute;left:221px;top:5.5px" width="14" height="14"><path d="M1.5,1.5 L11.5,11.5 M11.5,1.5 L1.5,11.5" stroke="#8a8a8a" stroke-width="1.1"/></svg></div>
 <div id="inp"><div id="inpt">QP50</div>
  <svg style="position:absolute;left:197px;top:1px" width="18" height="18"><path d="M16.50,9.00 L16.47,9.37 L16.38,9.73 L16.24,10.07 L16.04,10.40 L15.80,10.70 L15.53,10.98 L15.23,11.23 L14.91,11.45 L14.98,11.83 L15.02,12.22 L15.01,12.60 L14.97,12.99 L14.88,13.36 L14.73,13.70 L14.54,14.02 L14.30,14.30 L14.02,14.54 L13.70,14.73 L13.36,14.88 L12.99,14.97 L12.60,15.01 L12.22,15.02 L11.83,14.98 L11.45,14.91 L11.23,15.23 L10.98,15.53 L10.70,15.80 L10.40,16.04 L10.07,16.24 L9.73,16.38 L9.37,16.47 L9.00,16.50 L8.63,16.47 L8.27,16.38 L7.93,16.24 L7.60,16.04 L7.30,15.80 L7.02,15.53 L6.77,15.23 L6.55,14.91 L6.17,14.98 L5.78,15.02 L5.40,15.01 L5.01,14.97 L4.64,14.88 L4.30,14.73 L3.98,14.54 L3.70,14.30 L3.46,14.02 L3.27,13.70 L3.12,13.36 L3.03,12.99 L2.99,12.60 L2.98,12.22 L3.02,11.83 L3.09,11.45 L2.77,11.23 L2.47,10.98 L2.20,10.70 L1.96,10.40 L1.76,10.07 L1.62,9.73 L1.53,9.37 L1.50,9.00 L1.53,8.63 L1.62,8.27 L1.76,7.93 L1.96,7.60 L2.20,7.30 L2.47,7.02 L2.77,6.77 L3.09,6.55 L3.02,6.17 L2.98,5.78 L2.99,5.40 L3.03,5.01 L3.12,4.64 L3.27,4.30 L3.46,3.98 L3.70,3.70 L3.98,3.46 L4.30,3.27 L4.64,3.12 L5.01,3.03 L5.40,2.99 L5.78,2.98 L6.17,3.02 L6.55,3.09 L6.77,2.77 L7.02,2.47 L7.30,2.20 L7.60,1.96 L7.93,1.76 L8.27,1.62 L8.63,1.53 L9.00,1.50 L9.37,1.53 L9.73,1.62 L10.07,1.76 L10.40,1.96 L10.70,2.20 L10.98,2.47 L11.23,2.77 L11.45,3.09 L11.83,3.02 L12.22,2.98 L12.60,2.99 L12.99,3.03 L13.36,3.12 L13.70,3.27 L14.02,3.46 L14.30,3.70 L14.54,3.98 L14.73,4.30 L14.88,4.64 L14.97,5.01 L15.01,5.40 L15.02,5.78 L14.98,6.17 L14.91,6.55 L15.23,6.77 L15.53,7.02 L15.80,7.30 L16.04,7.60 L16.24,7.93 L16.38,8.27 L16.47,8.63 Z" fill="none" stroke="#6a6a6a" stroke-width="1.2"/><circle cx="9" cy="9" r="2.2" fill="none" stroke="#6a6a6a" stroke-width="1.3"/></svg>
 </div>
 <div class="btn" style="left:11px">Previous</div>
 <div class="btn" style="left:124px">Next</div>
 <svg style="position:absolute;left:12px;top:98px" width="6" height="8"><polygon points="0.5,0.5 5.5,4 0.5,7.5" fill="#111"/></svg>
 <div id="rep">Replace</div>
</div>
<svg style="position:absolute;left:0;top:0" width="1438" height="175"><line x1="925.8" y1="35.5" x2="1310.2" y2="35.5" stroke="#ff8000" stroke-width="1" stroke-dasharray="1.1 1 3 1.2" opacity="0.9"/><g clip-path="url(#pc2)"><defs><clipPath id="pc2"><rect x="1175" y="156.6" width="247" height="18"/></clipPath></defs><text x="1342.0" y="164.1" fill="#000080" font-size="9.75" stroke="#000080" stroke-width="0.2">RP172</text><text x="1407.9" y="164.2" fill="#000080" font-size="9.75" stroke="#000080" stroke-width="0.2">0</text></g></svg>
</body></html>
